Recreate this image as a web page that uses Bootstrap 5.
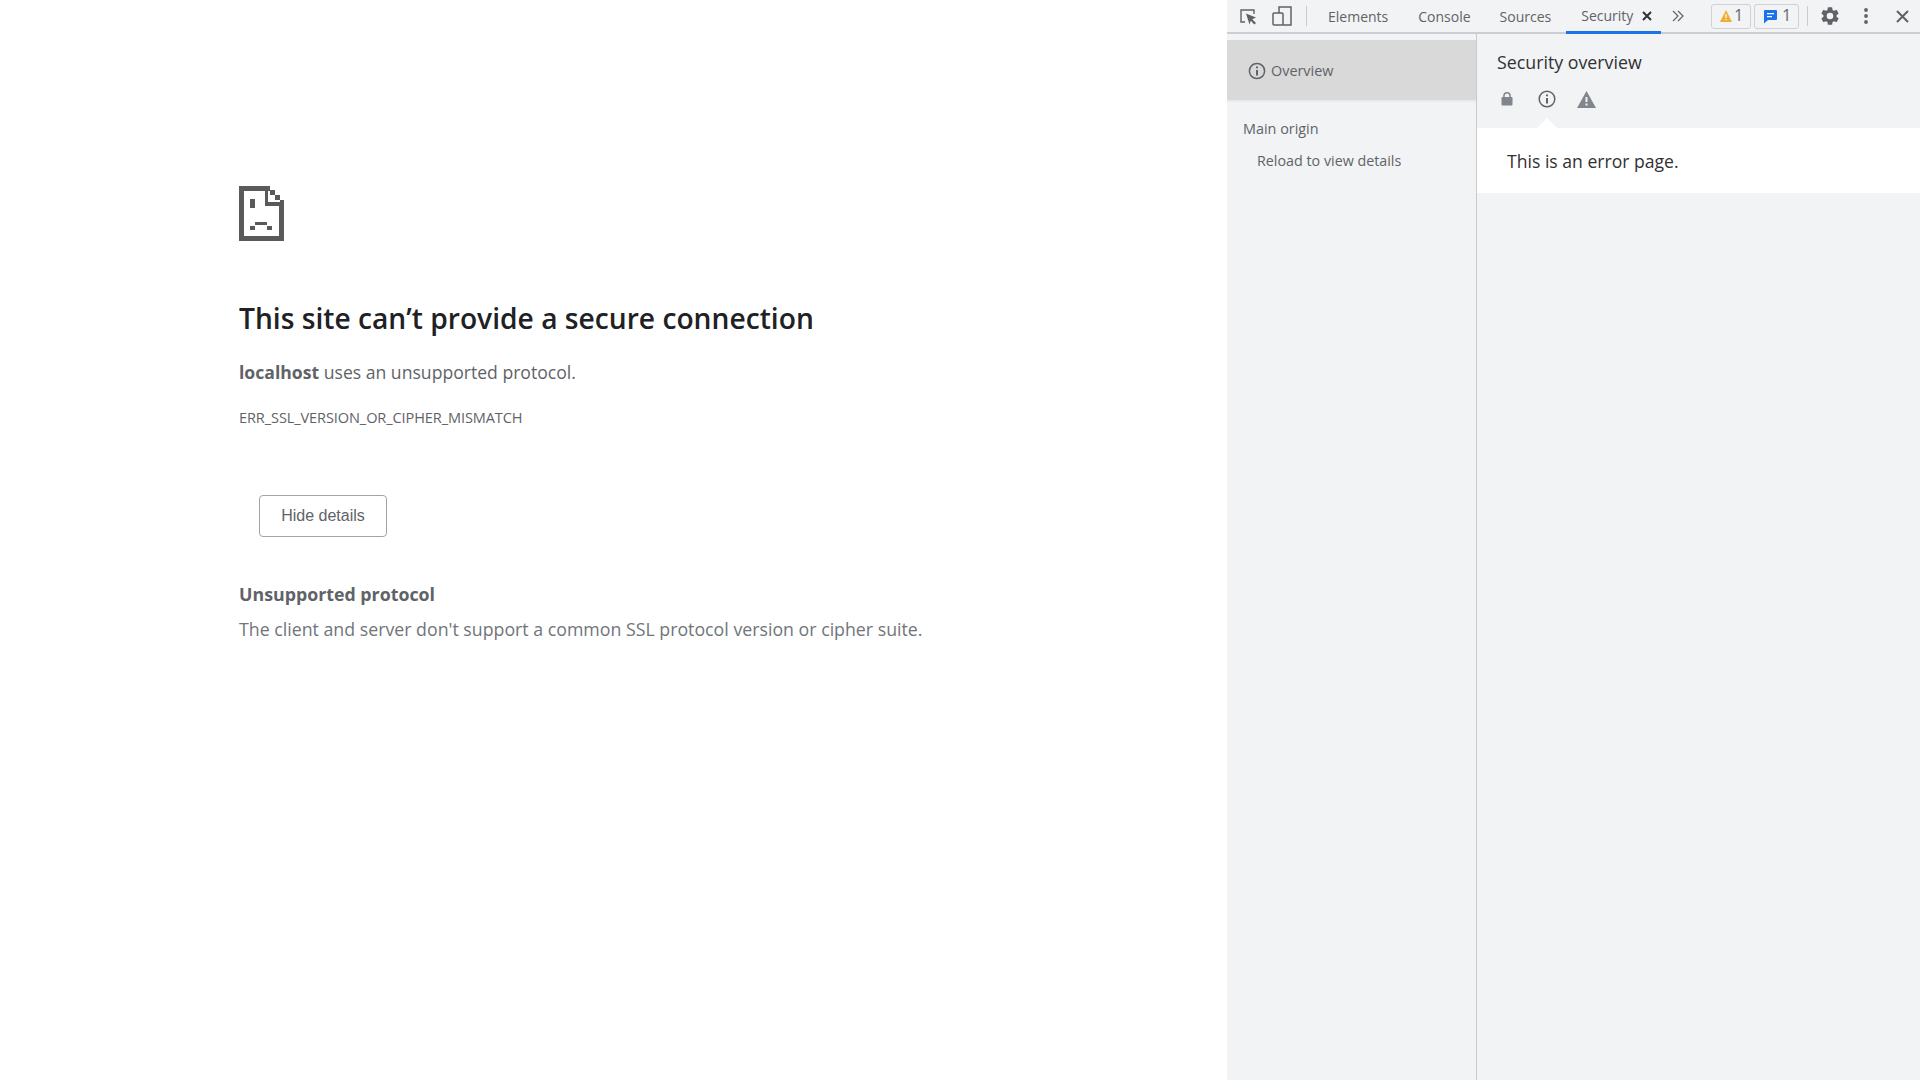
<!DOCTYPE html>
<html lang="en">
<head>
<meta charset="utf-8">
<title>localhost</title>
<link href="https://cdn.jsdelivr.net/npm/bootstrap@5.3.0/dist/css/bootstrap.min.css" rel="stylesheet">
<style>
html,body{height:100%;overflow:hidden;}
body{font-family:"Open Sans","Noto Sans",sans-serif;background:#fff;color:#5f6368;}
svg{display:block;flex:none;}
.shell{height:1080px;}
.errpage{width:1227px;padding:186px 0 0 239px;flex:none;}
.sad{margin-bottom:58px;}
.errtitle{font-size:28.2px;font-weight:600;line-height:38px;color:#202124;margin:0 0 22px;}
.errsum{font-size:17.6px;line-height:26px;margin:0 0 22px;color:#5f6368;}
.errsum b{font-weight:700;}
.errcode{font-size:14.55px;line-height:20px;color:#5f6368;margin:0;letter-spacing:-.1px;}
.hidebtn{display:block;margin:68px 0 0 20px;width:128px;height:42px;padding:0;font-family:"Liberation Sans",Arial,sans-serif;font-size:16px;color:#5f6368;background:#fff;border:1px solid #a0a4a8;border-radius:4px;}
.dethead{font-size:17.8px;font-weight:700;line-height:26px;margin:44px 0 9px;color:#5f6368;}
.detbody{font-size:17.76px;line-height:26px;margin:0;color:#70757a;}
.tools{width:693px;flex:none;background:#f1f3f4;}
.tbar{height:34px;border-bottom:2px solid #cbcdd1;padding-left:11px;font-size:14px;color:#5f6368;}
.tdiv{width:1px;height:20px;background:#ccc;}
.tabitem{height:32px;line-height:33px;white-space:nowrap;}
.tabactive{height:34px;margin-bottom:-2px;border-bottom:3px solid #1a73e8;padding:0 0 0 15px;width:95px;}
.mdevice{margin-left:14px;}
.mdiv{margin-left:14px;}
.mel{margin-left:21px;}
.mcon{margin-left:30px;}
.msrc{margin-left:29px;}
.msec{margin-left:15px;}
.mx{margin-left:9px;}
.mchev{margin-left:11px;}
.mcnt{margin-left:27px;}
.mcnt2{margin-left:3px;}
.mdiv2{margin-left:8px;}
.mgear{margin-left:11px;}
.mdots{margin-left:22px;}
.mclose{margin-left:27px;}
.counter{height:25px;border:1px solid #d0d1d4;border-radius:3px;padding:0 6px 0 8px;font-size:15.5px;line-height:1;}
.cnt1{width:40px;gap:2px;}
.cnt2{width:45px;gap:4px;}
.side{width:250px;flex:none;border-right:1px solid #c8cacd;padding-top:6px;}
.ovrow{height:59px;background:#d9d9d9;border-bottom:2px solid #e8e9eb;box-sizing:content-box;padding:1px 0 0 21px;gap:5px;font-size:14.4px;color:#5f6368;}
.orig{font-size:14.4px;line-height:20px;padding:17px 0 0 16px;margin:0;color:#5f6368;}
.reload{font-size:14.3px;line-height:20px;padding:12px 0 0 30px;margin:0;color:#5f6368;}
.mainp{min-width:0;}
.sechead{padding:14px 0 0 20px;height:94px;}
.sectitle{font-size:17.8px;line-height:28px;color:#303134;margin:0 0 14px;}
.secicons{padding-left:4px;}
.minfo{margin-left:25px;}
.mwarn{margin-left:21px;}
.msgband{background:#fff;height:65px;padding:1px 0 0 30px;font-size:17.6px;color:#303134;}
.arrow{position:absolute;left:60px;bottom:0;border:10px solid transparent;border-top:0;border-bottom-color:#fff;}
</style>
</head>
<body>
<div class="d-flex shell">
  <main class="errpage">
    <svg class="sad" width="45" height="55" viewBox="0 0 45 55" fill="#5a5a5a">
      <path fill-rule="evenodd" d="M0 0H31V4H36V9H41V14H45V55H0ZM5 5V50H40V20H26V5ZM29 5H31V9H36V14H41V16H29Z"/>
      <rect x="11" y="13" width="5" height="9"/><rect x="16" y="36" width="12" height="3"/><rect x="11" y="40" width="5" height="4"/><rect x="28" y="40" width="5" height="4"/>
    </svg>
    <h1 class="errtitle">This site can’t provide a secure connection</h1>
    <p class="errsum"><b>localhost</b> uses an unsupported protocol.</p>
    <p class="errcode">ERR_SSL_VERSION_OR_CIPHER_MISMATCH</p>
    <button type="button" class="hidebtn">Hide details</button>
    <h2 class="dethead">Unsupported protocol</h2>
    <p class="detbody">The client and server don't support a common SSL protocol version or cipher suite.</p>
  </main>
  <section class="tools d-flex flex-column">
    <div class="tbar d-flex align-items-center">
      <svg width="20" height="20" viewBox="0 0 20 20" fill="none" stroke="#5f6368" stroke-width="1.4"><path d="M7 16H3V4H16V8"/><path fill="#5f6368" stroke="none" d="M8 7.5L18 11.5L14.3 13.2L18 17L16.3 18.6L12.8 14.8L11.5 18.5Z"/></svg>
      <svg class="mdevice" width="20" height="20" viewBox="0 0 20 20" fill="none" stroke="#5f6368" stroke-width="1.5"><path d="M7 7V1H19V19H11"/><rect x="1" y="7" width="10" height="12" rx="1"/></svg>
      <span class="tdiv mdiv"></span>
      <span class="tabitem mel">Elements</span>
      <span class="tabitem mcon">Console</span>
      <span class="tabitem msrc">Sources</span>
      <span class="tabitem tabactive d-flex align-items-center msec text-nowrap">Security
        <svg class="mx" width="10" height="10" viewBox="0 0 10 10" stroke="#303134" stroke-width="2"><path d="M1 1L9 9M9 1L1 9"/></svg>
      </span>
      <svg class="mchev" width="12" height="12" viewBox="0 0 12 12" fill="none" stroke="#5f6368" stroke-width="1.2"><path d="M1 1L6 6L1 11M6 1L11 6L6 11"/></svg>
      <span class="counter cnt1 d-flex align-items-center mcnt">
        <svg width="12" height="12" viewBox="0 0 12 12"><path fill="#f0ad30" d="M6 0L12 12H0Z"/><path fill="#fff" d="M5.4 4H6.6V8H5.4ZM5.4 9H6.6V10.2H5.4Z"/></svg>1</span>
      <span class="counter cnt2 d-flex align-items-center mcnt2">
        <svg width="15" height="15" viewBox="0 0 15 15"><path fill="#1a73e8" d="M2 1H13a1 1 0 0 1 1 1V10a1 1 0 0 1-1 1H5L1 14.5V2a1 1 0 0 1 1-1Z"/><path fill="#fff" d="M4 4H11V5.3H4ZM4 7H9V8.3H4Z"/></svg>
        1</span>
      <span class="tdiv mdiv2"></span>
      <svg class="mgear" width="22" height="22" viewBox="0 0 24 24" fill="#5f6368"><path d="M19.14 12.94c.04-.3.06-.61.06-.94s-.02-.64-.07-.94l2.03-1.58a.49.49 0 0 0 .12-.61l-1.92-3.32a.49.49 0 0 0-.59-.22l-2.39.96a7 7 0 0 0-1.62-.94l-.36-2.54a.48.48 0 0 0-.48-.41h-3.84a.48.48 0 0 0-.47.41l-.36 2.54a7.3 7.3 0 0 0-1.62.94l-2.39-.96a.49.49 0 0 0-.59.22L2.74 8.87a.48.48 0 0 0 .12.61l2.03 1.58c-.05.3-.09.63-.09.94s.02.64.07.94l-2.03 1.58a.49.49 0 0 0-.12.61l1.92 3.32c.12.22.37.29.59.22l2.39-.96c.5.38 1.03.7 1.62.94l.36 2.54c.05.24.24.41.48.41h3.84c.24 0 .44-.17.47-.41l.36-2.54a7 7 0 0 0 1.62-.94l2.39.96c.22.08.47 0 .59-.22l1.92-3.32a.48.48 0 0 0-.12-.61zM12 15.6a3.6 3.6 0 1 1 0-7.2 3.6 3.6 0 0 1 0 7.2z"/></svg>
      <svg class="mdots" width="6" height="18" viewBox="0 0 6 18" fill="#5f6368"><circle cx="3" cy="3" r="1.9"/><circle cx="3" cy="9" r="1.9"/><circle cx="3" cy="15" r="1.9"/></svg>
      <svg class="mclose" width="13" height="13" viewBox="0 0 13 13" stroke="#5f6368" stroke-width="2"><path d="M1 1L12 12M12 1L1 12"/></svg>
    </div>
    <div class="d-flex flex-grow-1">
      <nav class="side">
        <div class="ovrow d-flex align-items-center">
          <svg width="18" height="18" viewBox="0 0 18 18" fill="none" stroke="#5f6368" stroke-width="1.5"><circle cx="9" cy="9" r="7.6"/><path d="M9 8V13.5M9 4.5V6.3" stroke-width="2"/></svg>
          <span>Overview</span>
        </div>
        <p class="orig">Main origin</p>
        <p class="reload">Reload to view details</p>
      </nav>
      <div class="mainp flex-grow-1">
        <div class="sechead position-relative">
          <p class="sectitle">Security overview</p>
          <div class="secicons d-flex align-items-center">
            <svg width="12" height="14" viewBox="0 0 12 14"><path fill="#80868b" d="M2.2 5V3.8a3.8 3.8 0 0 1 7.6 0V5H10.5A1 1 0 0 1 11.5 6V12.5A1 1 0 0 1 10.5 13.5H1.5A1 1 0 0 1 .5 12.5V6A1 1 0 0 1 1.5 5ZM3.7 5H8.3V3.8a2.3 2.3 0 0 0-4.6 0Z"/></svg>
            <svg class="minfo" width="18" height="18" viewBox="0 0 18 18" fill="none" stroke="#5f6368" stroke-width="1.5"><circle cx="9" cy="9" r="7.8"/><path d="M9 8V13.5M9 4.5V6.3" stroke-width="2"/></svg>
            <svg class="mwarn" width="19" height="17" viewBox="0 0 19 17"><path fill="#80868b" d="M9.5 0L19 17H0Z"/><path fill="#f1f3f4" d="M8.5 6H10.5V11H8.5ZM8.5 12.5H10.5V14.5H8.5Z"/></svg>
          </div>
          <span class="arrow"></span>
        </div>
        <div class="msgband d-flex align-items-center">This is an error page.</div>
      </div>
    </div>
  </section>
</div>
</body>
</html>
